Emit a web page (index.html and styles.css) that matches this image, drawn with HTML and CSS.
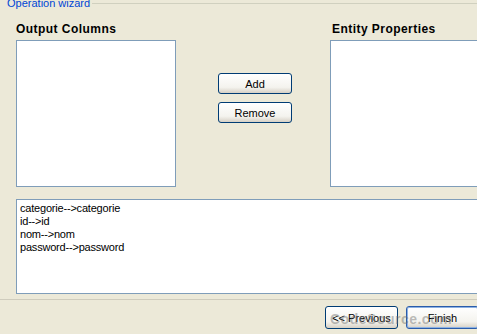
FILE: index.html
```html
<!DOCTYPE html>
<html>
  <head>
    <meta charset="UTF-8">
    <title>Operation wizard</title>
    <link rel="stylesheet" href="styles.css">
  </head>
  <body>
  <div class=page>
    <div class=group>
      <div class=legend><span class=legend-text>Operation wizard</span><span class=legend-line></span></div>
      <div class=panes>
        <div class=pane>
          <div class=heading>Output Columns</div>
          <div class=listbox></div>
        </div>
        <div class=actions>
          <button class=btn>Add</button>
          <button class=btn>Remove</button>
        </div>
        <div class=pane>
          <div class="heading entity">Entity Properties</div>
          <div class=listbox></div>
        </div>
      </div>
      <div class=mapping>
        <div>categorie--&gt;categorie</div>
        <div>id--&gt;id</div>
        <div>nom--&gt;nom</div>
        <div>password--&gt;password</div>
      </div>
    </div>
    <div class=footer>
      <button class="btn nav">&lt;&lt; Previous</button>
      <button class="btn nav default">Finish</button>
      <span class=watermark>CodeSource.com</span>
    </div>
  </div>
  </body>
</html>
```

FILE: styles.css
```css
body {
  margin: 0;
  background-color: #ECE9D8;
  font-family: "Liberation Sans", Arial, sans-serif;
  font-size: 11px;
  color: #000000;
  overflow: hidden;
  }

.page {
  width: 477px;
  height: 334px;
  overflow: hidden;
  }

.group {
  padding-left: 16px;
  }

.legend {
  display: flex;
  align-items: center;
  height: 7px;
  margin-left: -9px;
  }

.legend-text {
  color: #0046D5;
  line-height: 13px;
  padding-right: 2px;
  }

.legend-line {
  flex: 1;
  border-top: 1px solid #D0D0BF;
  }

.panes {
  display: flex;
  margin-top: 15px;
  }

.pane {
  width: 160px;
  flex: none;
  }

.heading {
  font-weight: bold;
  font-size: 12px;
  letter-spacing: 0.45px;
  line-height: 14px;
  height: 18px;
  }

.entity {
  padding-left: 2px;
  }

.listbox {
  height: 145px;
  background-color: #FFFFFF;
  border: 1px solid #7F9DB9;
  }

.actions {
  width: 112px;
  flex: none;
  padding: 51px 0 0 42px;
  display: flex;
  flex-direction: column;
  gap: 8px;
  }

.btn {
  width: 74px;
  height: 21px;
  padding: 0;
  font-family: "Liberation Sans", Arial, sans-serif;
  font-size: 11px;
  color: #000000;
  border: 1px solid #003C74;
  border-radius: 3px;
  background: linear-gradient(#FFFFFF, #F4F3EE 70%, #D6D0C5);
  }

.mapping {
  margin-top: 12px;
  width: 470px;
  height: 91px;
  padding: 2px 0 0 3px;
  background-color: #FFFFFF;
  border: 1px solid #7F9DB9;
  line-height: 13px;
  letter-spacing: -0.2px;
  }

.footer {
  position: relative;
  display: flex;
  gap: 8px;
  margin-top: 5px;
  padding: 6px 0 0 325px;
  border-top: 1px solid #CFCCBD;
  }

.nav {
  width: 73px;
  height: 23px;
  flex: none;
  }

.default {
  border-color: #2A5CAA;
  box-shadow: inset 0 0 0 1px #8DB2E3;
  }

.watermark {
  position: absolute;
  left: 330px;
  top: 11px;
  font-size: 14px;
  font-weight: bold;
  letter-spacing: 0.5px;
  color: rgba(110, 110, 110, 0.45);
  pointer-events: none;
  }
```
